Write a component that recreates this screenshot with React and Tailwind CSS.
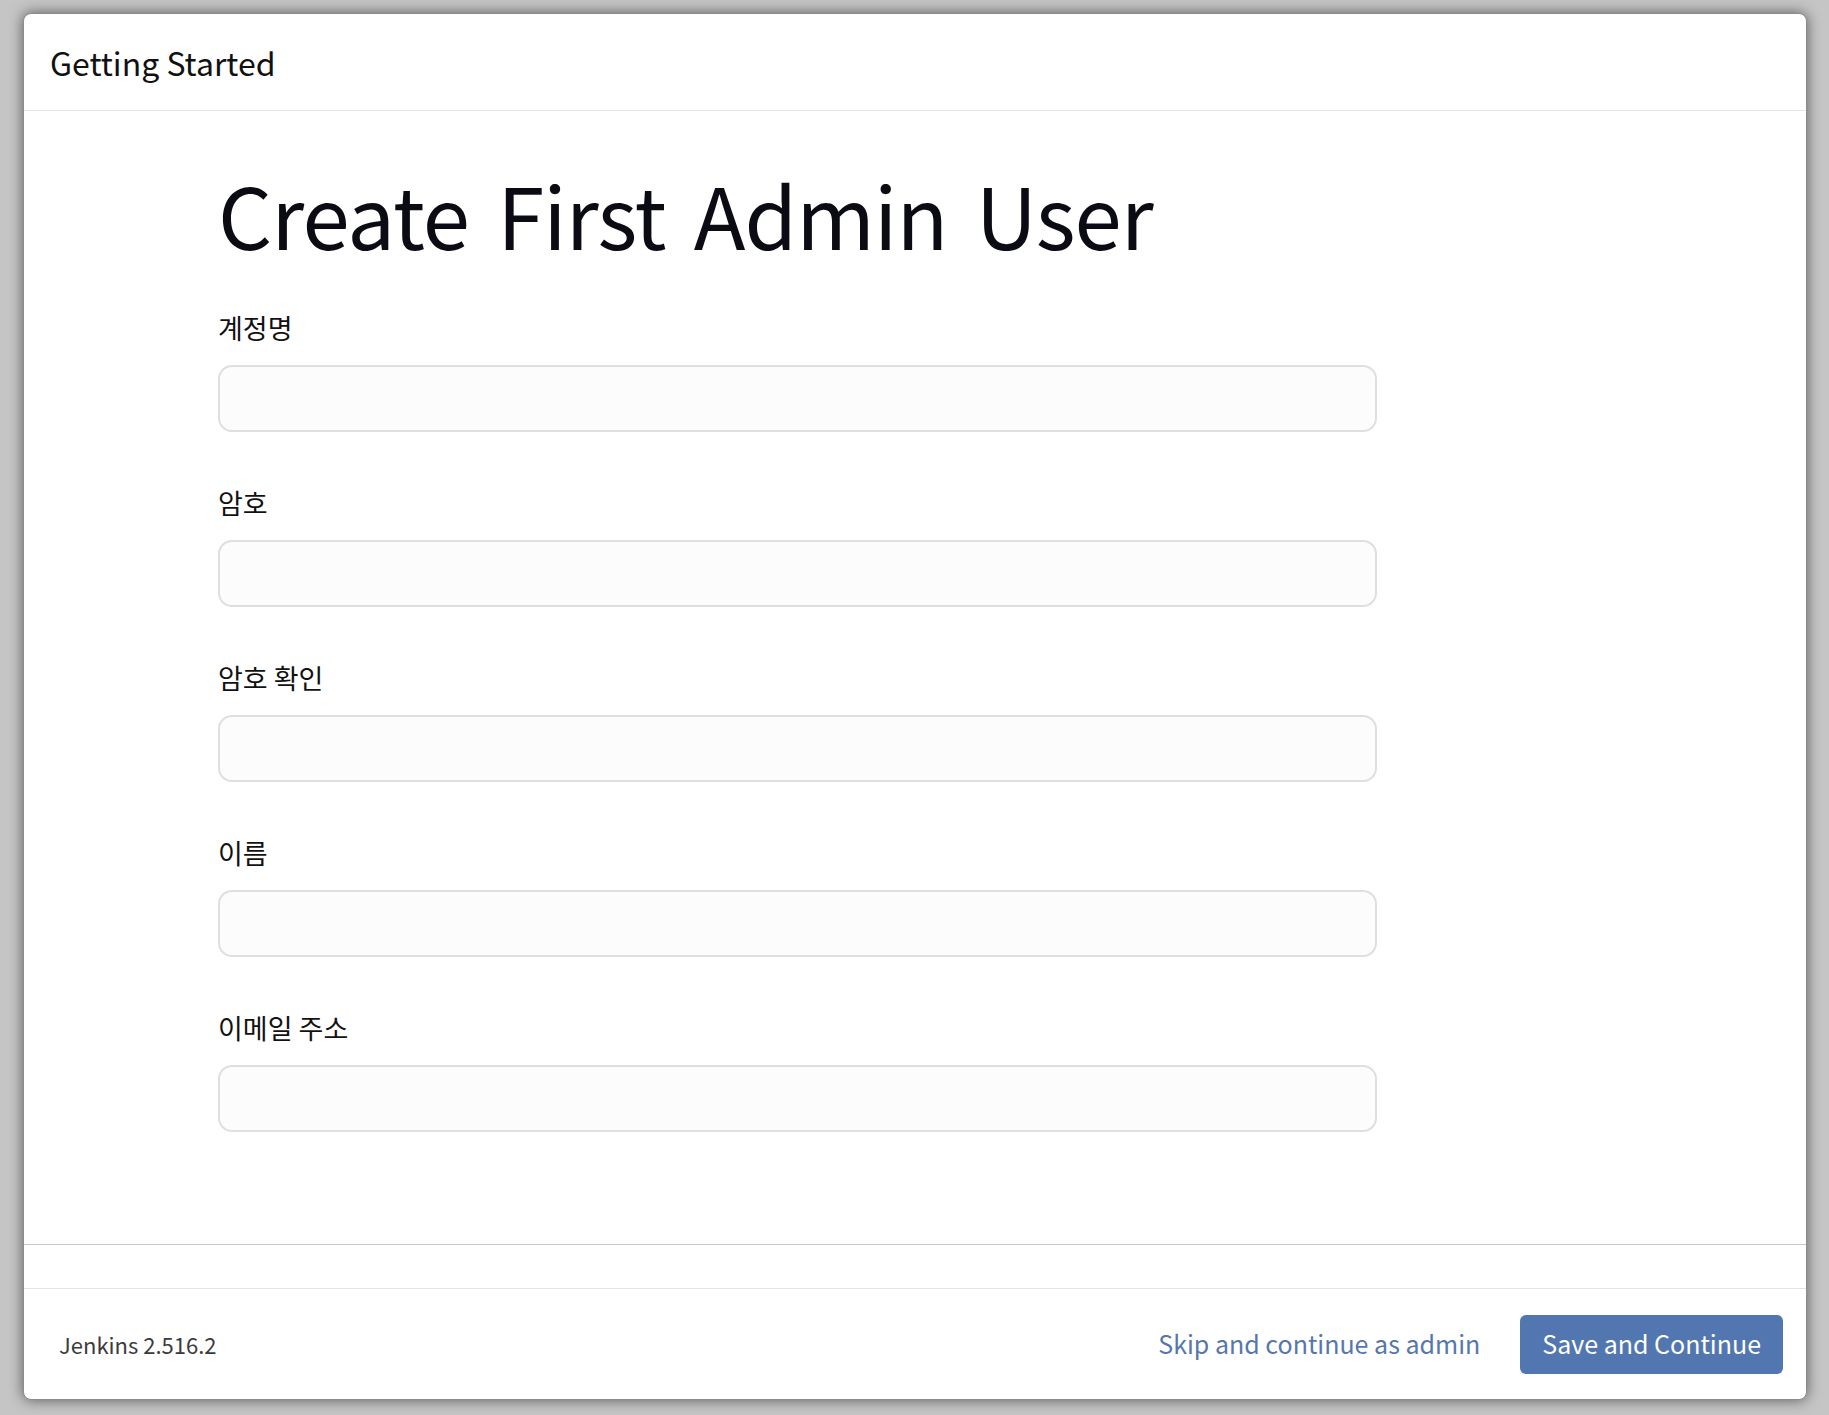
import React from 'react';

const fields = ['계정명', '암호', '암호 확인', '이름', '이메일 주소'];

function Field({ label }) {
  return (
    <div className="flex flex-col">
      <label className="text-[27px] leading-[34px] text-[#111]">{label}</label>
      <input
        type="text"
        className="mt-[20px] h-[67px] w-[1159px] rounded-[14px] border-2 border-[#dfdfe3] bg-[#fcfcfd] outline-none"
      />
    </div>
  );
}

export default function App() {
  return (
    <div
      className="min-h-screen w-full bg-[#c5c5c5] pt-[13px] pl-[23px]"
      style={{ fontFamily: '"Noto Sans CJK KR", "Noto Sans", sans-serif' }}
    >
      <div className="flex h-[1387px] w-[1784px] flex-col overflow-hidden rounded-lg border border-[#8c8c8c] bg-white shadow-[0_0_14px_rgba(0,0,0,0.55)]">
        {/* header */}
        <div className="flex h-[97px] shrink-0 items-center border-b border-[#e6e6e6] pl-[26px]">
          <h4 className="text-[32px] font-normal text-[#111]">Getting Started</h4>
        </div>

        {/* body */}
        <div className="flex-1 border-b border-[#c9c9c9] pl-[194px] pt-[52px]">
          <h1 className="text-[85px] leading-[100px] font-normal tracking-[-0.9px] [word-spacing:10px] text-[#0b0b14]">
            Create First Admin User
          </h1>
          <div className="mt-[48px] flex flex-col gap-[54px]">
            {fields.map(f => (
              <Field key={f} label={f} />
            ))}
          </div>
        </div>

        <div className="h-[44px] shrink-0 border-b border-[#e3e3e3]" />

        {/* footer */}
        <div className="flex h-[110px] shrink-0 items-center justify-between pl-[35px] pr-[23px]">
          <span className="text-[22px] text-[#3b3b3b]">Jenkins 2.516.2</span>
          <div className="flex items-center gap-[40px]">
            <a className="text-[25px] text-[#5677ab]">Skip and continue as admin</a>
            <button className="h-[59px] rounded-md bg-[#5277b0] px-[22px] text-[25px] text-white">
              Save and Continue
            </button>
          </div>
        </div>
      </div>
    </div>
  );
}
